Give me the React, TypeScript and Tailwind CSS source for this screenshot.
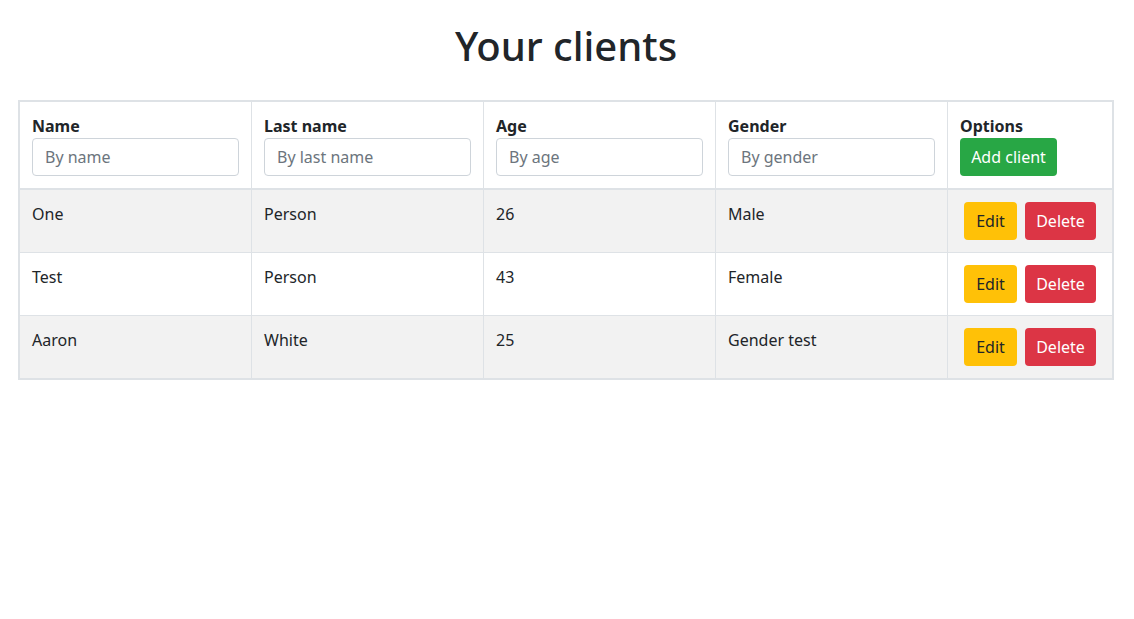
const clients = [
  { name: "One", lastName: "Person", age: 26, gender: "Male" },
  { name: "Test", lastName: "Person", age: 43, gender: "Female" },
  { name: "Aaron", lastName: "White", age: 25, gender: "Gender test" },
];

const filters = [
  { label: "Name", placeholder: "By name" },
  { label: "Last name", placeholder: "By last name" },
  { label: "Age", placeholder: "By age" },
  { label: "Gender", placeholder: "By gender" },
];

export default function App() {
  return (
    <div
      className="min-h-screen bg-white pl-[18px] pr-[20px] text-[16px] text-[#212529]"
      style={{ fontFamily: '"Segoe UI", "Noto Sans", sans-serif' }}
    >
      <h1 className="pt-[22px] pb-[30px] text-center text-[40px] font-medium leading-[48px]">Your clients</h1>

      <div className="border-2 border-[#dee2e6]">
        <table className="w-full table-fixed border-separate border-spacing-0">
          <colgroup>
            <col className="w-[232px]" />
            <col className="w-[232px]" />
            <col className="w-[232px]" />
            <col className="w-[232px]" />
            <col />
          </colgroup>
          <thead>
            <tr>
              {filters.map((f) => (
                <th key={f.label} className="border-r border-b-2 border-[#dee2e6] p-3 text-left align-top font-bold">
                  <div className="leading-6">{f.label}</div>
                  <input
                    type="text"
                    placeholder={f.placeholder}
                    className="block h-[38px] w-full rounded-[4px] border border-[#ced4da] bg-white px-3 text-[16px] font-normal text-[#495057] placeholder:text-[#6c757d] outline-none"
                  />
                </th>
              ))}
              <th className="border-b-2 border-[#dee2e6] p-3 text-left align-top font-bold">
                <div className="leading-6">Options</div>
                <button
                  type="button"
                  className="h-[38px] w-[97px] rounded-[4px] bg-[#28a745] text-[16px] font-normal text-white"
                >
                  Add client
                </button>
              </th>
            </tr>
          </thead>
          <tbody>
            {clients.map((c, i) => (
              <tr key={c.name} className={i % 2 === 0 ? "bg-[#f2f2f2]" : "bg-white"}>
                {[c.name, c.lastName, String(c.age), c.gender].map((v, j) => (
                  <td
                    key={j}
                    className={`border-r border-[#dee2e6] p-3 align-top leading-6 ${i < clients.length - 1 ? "border-b" : ""}`}
                  >
                    {v}
                  </td>
                ))}
                <td className={`border-[#dee2e6] p-3 align-top ${i < clients.length - 1 ? "border-b" : ""}`}>
                  <div className="flex gap-2 px-1">
                    <button type="button" className="h-[38px] w-[53px] rounded-[4px] bg-[#ffc107] text-[16px] text-[#212529]">
                      Edit
                    </button>
                    <button type="button" className="h-[38px] w-[71px] rounded-[4px] bg-[#dc3545] text-[16px] text-white">
                      Delete
                    </button>
                  </div>
                </td>
              </tr>
            ))}
          </tbody>
        </table>
      </div>
    </div>
  );
}
